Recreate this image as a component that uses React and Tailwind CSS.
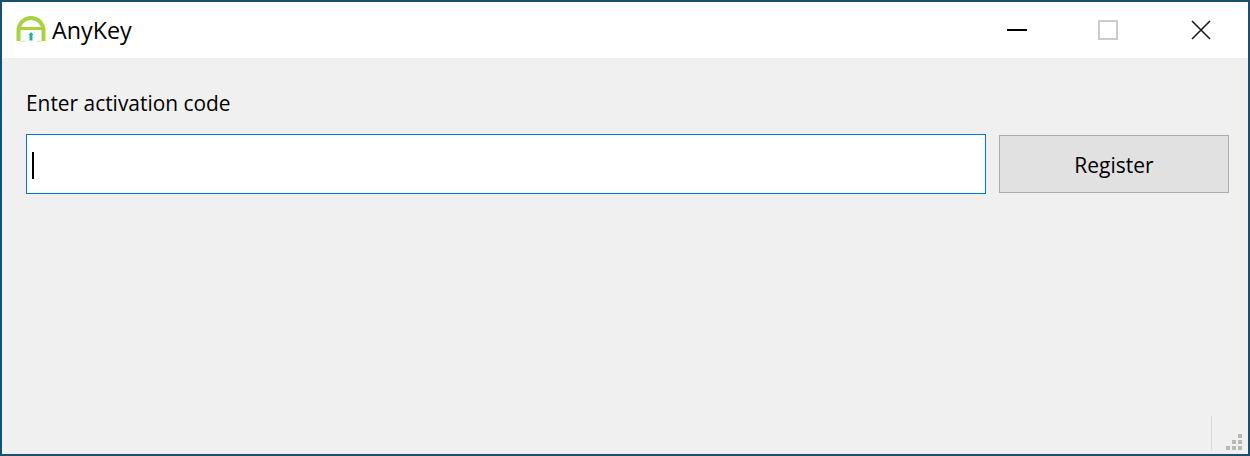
import React from 'react';

const FONT = "font-['Open_Sans','Noto_Sans',sans-serif]";

const Logo = () => (
  <svg width="32" height="28" viewBox="0 0 32 28" fill="none" className="shrink-0">
    <path d="M3.5 25V14.5a12.5 12.5 0 0 1 25 0V25" stroke="#a9d23f" strokeWidth="4" />
    <path d="M4 12.5h24" stroke="#a9d23f" strokeWidth="3" />
    <path d="M5 25.2h5M22 25.2h5" stroke="#c9e48a" strokeWidth="0.9" />
    <path d="M14.5 19h3v5.5h-3z" fill="#1fb887" />
    <path d="M16 16l2.5 3h-5z" fill="#1fb887" />
  </svg>
);

const WindowButtons = () => (
  <div className="flex items-center">
    <svg width="20" height="20" viewBox="0 0 20 20">
      <path d="M0 10h20" stroke="#000" strokeWidth="2" />
    </svg>
    <svg width="20" height="20" viewBox="0 0 20 20" className="ml-[71px]">
      <rect x="1" y="1" width="18" height="18" fill="none" stroke="#cccccc" strokeWidth="2" />
    </svg>
    <svg width="20" height="20" viewBox="0 0 20 20" className="ml-[73px]">
      <path d="M1 1l18 18M19 1L1 19" stroke="#1a1a1a" strokeWidth="1.6" />
    </svg>
  </div>
);

const ResizeGrip = () => (
  <div className="absolute bottom-0 right-0 flex items-end">
    <div className="mb-[4px] h-[34px] w-px bg-[#d9d9d9]" />
    <svg width="36" height="20" viewBox="0 0 36 20" fill="#b8b8b8">
      <rect x="14" y="12" width="4" height="4" />
      <rect x="20" y="12" width="4" height="4" />
      <rect x="26" y="12" width="4" height="4" />
      <rect x="20" y="6" width="4" height="4" />
      <rect x="26" y="6" width="4" height="4" />
      <rect x="26" y="0" width="4" height="4" />
    </svg>
  </div>
);

export default function App() {
  return (
    <div className={`relative flex h-[456px] w-[1250px] flex-col border-2 border-[#1b4f72] bg-[#f0f0f0] text-black ${FONT}`}>
      {/* title bar */}
      <div className="flex h-[56px] shrink-0 items-center justify-between bg-white pl-[13px] pr-[37px]">
        <div className="flex items-center gap-[5px]">
          <Logo />
          <span className="text-[23.3px]">AnyKey</span>
        </div>
        <WindowButtons />
      </div>

      {/* form */}
      <div className="flex flex-col pl-[24px] pr-[19px] pt-[31px]">
        <label className="text-[20.9px] leading-[28px]">Enter activation code</label>
        <div className="mt-[17px] flex items-center gap-[13px]">
          <div className="flex h-[60px] w-[960px] shrink-0 items-center border border-[#0078d7] bg-white pl-[5px] pt-[3px]">
            <div className="h-[27px] w-[2px] bg-black" />
          </div>
          <button className="h-[58px] w-[230px] shrink-0 border border-[#adadad] bg-[#e1e1e1] pt-[4px] text-[21px]">Register</button>
        </div>
      </div>

      <ResizeGrip />
    </div>
  );
}
